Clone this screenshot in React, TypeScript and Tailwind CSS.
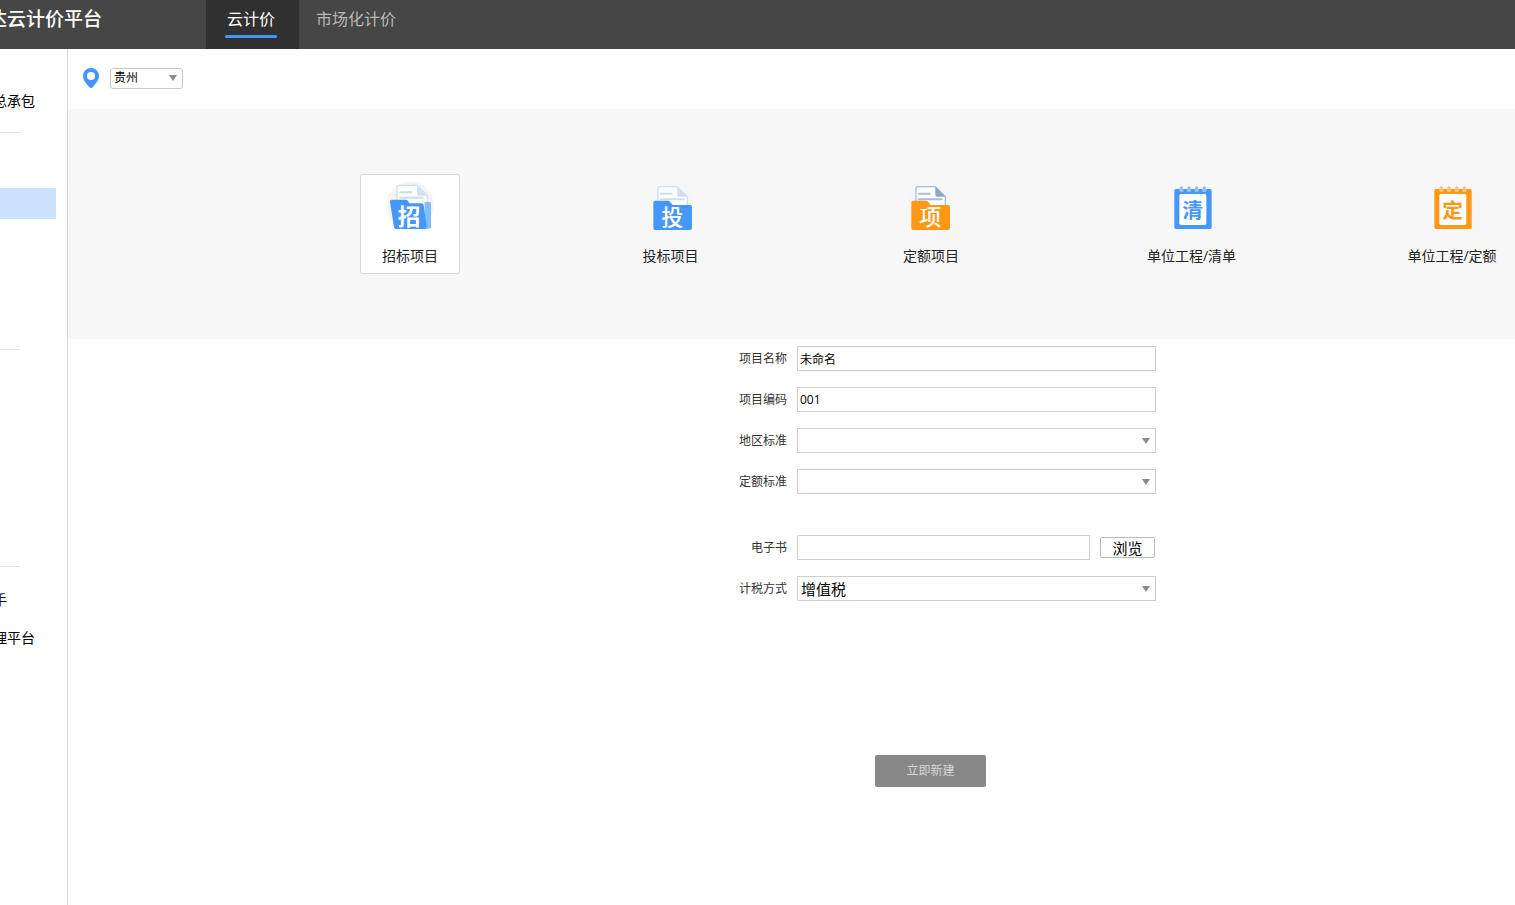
import {useState} from "react";
import type {ReactNode} from "react";
import clsx from "clsx";

const ICON_FONT = "'Noto Sans CJK SC', sans-serif";

const BLUE = "#4697fb";
const ORANGE = "#fd9716";

const BidIcon = () => (
    <svg viewBox="105 48 150 150" className="size-[50px]" aria-hidden="true">
        <circle cx="180" cy="121" r="71" fill="#f5f5f6"/>
        <path d="M144 61h57l31 31v60h-91V65a5 5 0 0 1 5-4z" fill="#fdfeff" stroke="#cfe0f3" strokeWidth="4"/>
        <path d="M201 61v26a5 5 0 0 0 5 5h26z" fill="#d3e0f0"/>
        <path d="M151 82h33M151 98h67" stroke="#cddced" strokeWidth="6" strokeLinecap="round"/>
        <path d="M224 111h15a4 4 0 0 1 4 4v71a5 5 0 0 1-5 5h-16z" fill="#82bdff"/>
        <path
            d="M124 104h44a6 6 0 0 1 5 3l5 8h37a6 6 0 0 1 6 5l9 66a5 5 0 0 1-5 6h-87a6 6 0 0 1-6-5l-12-77a5 5 0 0 1 4-6z"
            fill={BLUE}
        />
        <text x="177" y="181" fontSize="68" fontWeight="700" fill="#fff" textAnchor="middle" fontFamily={ICON_FONT}>招</text>
    </svg>
);

type FolderIconProps = { text: string, color: string, line: string, fold: string, viewBox: string };

const FolderIcon = ({text, color, line, fold, viewBox}: FolderIconProps) => (
    <svg viewBox={viewBox} className="size-[50px]" aria-hidden="true">
        <circle cx="123" cy="92" r="72" fill="#f6f6f7"/>
        <path d="M89 35h53l30 30v60H84V39a5 5 0 0 1 5-4z" fill="#fdfeff" stroke={line} strokeWidth="4"/>
        <path d="M142 35v25a5 5 0 0 0 5 5h26z" fill={fold}/>
        <path d="M92 56h33M92 73h69" stroke={line} strokeWidth="6" strokeLinecap="round"/>
        <path
            d="M75 77h39a8 8 0 0 1 6 3l8 10h52a6 6 0 0 1 6 6v63a6 6 0 0 1-6 6H76a6 6 0 0 1-6-6V82a5 5 0 0 1 5-5z"
            fill={color}
        />
        <text x="127" y="150" fontSize="66" fontWeight="500" fill="#fff" textAnchor="middle" fontFamily={ICON_FONT}>{text}</text>
    </svg>
);

type NotebookIconProps = { text: string, color: string, ring: string };

const NotebookIcon = ({text, color, ring}: NotebookIconProps) => (
    <svg viewBox="81 18 150 150" className="size-[50px]" aria-hidden="true">
        <rect x="103" y="42" width="112" height="120" rx="5" fill={color}/>
        <rect x="118" y="57" width="81" height="93" rx="5" fill="#fff"/>
        {[124, 147, 170, 193].map(x => (
            <g key={x}>
                <circle cx={x} cy="45" r="7" fill={ring}/>
                <circle cx={x} cy="39" r="5" fill={ring}/>
            </g>
        ))}
        <text x="158" y="128" fontSize="62" fontWeight="700" fill={color} textAnchor="middle" fontFamily={ICON_FONT}>{text}</text>
    </svg>
);

const projectTypes: { label: string, icon: ReactNode }[] = [
    {label: "招标项目", icon: <BidIcon/>},
    {
        label: "投标项目",
        icon: <FolderIcon text="投" color={BLUE} line="#cfdff0" fold="#cfdff0" viewBox="48 18 150 150"/>
    },
    {
        label: "定额项目",
        icon: <FolderIcon text="项" color={ORANGE} line="#a9bdd6" fold="#8da7c4" viewBox="54 18 150 150"/>
    },
    {label: "单位工程/清单", icon: <NotebookIcon text="清" color={BLUE} ring="#8fc1fb"/>},
    {label: "单位工程/定额", icon: <NotebookIcon text="定" color={ORANGE} ring="#fbc27c"/>},
];

const Arrow = ({className}: { className: string }) => (
    <svg viewBox="0 0 8 6" className={clsx("pointer-events-none absolute h-[6px] w-[8px]", className)} aria-hidden="true">
        <path d="M0 0h8L4 6z" fill="#8a8a8a"/>
    </svg>
);

const Header = () => (
    <header className="flex h-[49px] bg-[#464646] text-base leading-6">
        <div className="flex w-[102px] justify-end overflow-hidden pt-[7px]">
            <h1 className="shrink-0 whitespace-nowrap text-[19px] font-medium text-white">达云计价平台</h1>
        </div>
        <nav className="ml-[104px] flex">
            <a href="#cloud" className="bg-[#303030] pt-[7px] pr-[22px] pl-[19px] text-white">
                <span className="block w-[52px] text-center">云计价</span>
                <span className="mt-1 block h-[3px] rounded-full bg-[#4196ff]"/>
            </a>
            <a href="#market" className="px-[17px] pt-[7px] text-[#b9b9b9]">市场化计价</a>
        </nav>
    </header>
);

const SideItem = ({label, width = "w-[35px]"}: { label: string, width?: string }) => (
    <a href="#side" className={clsx("flex h-[30px] items-center justify-end overflow-hidden text-sm text-black", width)}>
        <span className="shrink-0 whitespace-nowrap">{label}</span>
    </a>
);

const Divider = () => <hr className="w-5 border-[#e3e3e3]"/>;

const Sidebar = () => (
    <aside className="flex w-[68px] shrink-0 flex-col border-r border-[#d7d7d7] pt-[37px]">
        <SideItem label="总承包"/>
        <div className="h-4"/>
        <Divider/>
        <div className="mt-[55px] mb-[130px] h-[31px] w-14 bg-[#cce3ff]"/>
        <Divider/>
        <div className="h-[216px]"/>
        <Divider/>
        <div className="mt-[18px] flex flex-col gap-2">
            <SideItem label="手" width="w-[7px]"/>
            <SideItem label="理平台"/>
        </div>
    </aside>
);

const Field = ({id, label, children}: { id: string, label: string, children: ReactNode }) => (
    <div className="flex items-center gap-[10px]">
        <label htmlFor={id} className="w-[82px] text-right text-xs text-[#333]">{label}</label>
        <div className="flex w-[359px] items-center gap-[10px]">{children}</div>
    </div>
);

const inputClass = "h-[25px] w-full min-w-0 border border-[#cfcfcf] bg-white px-[2px] text-xs text-black outline-none";

const SelectBox = ({id, options = []}: { id: string, options?: string[] }) => (
    <div className="relative w-full">
        <select
            id={id}
            className="block h-[25px] w-full appearance-none border border-[#cfcfcf] bg-white px-[3px] text-[15px] leading-[22px] text-black outline-none"
        >
            {options.map(option => <option key={option}>{option}</option>)}
        </select>
        <Arrow className="top-[10px] right-[6px]"/>
    </div>
);

const App = () => {
    const [selected, setSelected] = useState(0);
    const [name, setName] = useState("未命名");
    const [code, setCode] = useState("001");
    const [book, setBook] = useState("");

    return <div className="flex min-h-screen flex-col bg-white font-['Open_Sans','Noto_Sans_CJK_SC',sans-serif]">
        <Header/>
        <div className="flex flex-1">
            <Sidebar/>
            <main className="min-w-0 flex-1">
                <div className="flex h-[60px] items-center gap-[11px] pb-[2px] pl-[15px]">
                    <svg viewBox="0 0 16 20" className="h-5 w-4" aria-hidden="true">
                        <path
                            d="M8 0a8 8 0 0 1 8 8c0 4-3 7-6 11a2.500 2.500 0 0 1-4 0C3 15 0 12 0 8a8 8 0 0 1 8-8z"
                            fill="#4196ff"
                        />
                        <circle cx="8" cy="8" r="4" fill="#fff"/>
                    </svg>
                    <div className="relative">
                        <select
                            aria-label="地区"
                            className="block h-[21px] w-[73px] appearance-none rounded-[3px] border border-[#c9c9c9] bg-white pl-[3px] text-xs text-black outline-none"
                        >
                            <option>贵州</option>
                        </select>
                        <Arrow className="top-[7px] right-[6px]"/>
                    </div>
                </div>

                <section className="flex h-[230px] items-start justify-between bg-[#f7f7f7] pt-[65px] pr-[13px] pl-[292px]">
                    {projectTypes.map(({label, icon}, index) => (
                        <button
                            key={label}
                            type="button"
                            onClick={() => setSelected(index)}
                            className={clsx(
                                "flex h-[100px] w-[100px] shrink-0 flex-col items-center gap-[15px] rounded-[3px] border pt-[6px]",
                                index === selected ? "border-[#d5dadc] bg-white" : "border-transparent"
                            )}
                        >
                            {icon}
                            <span className="whitespace-nowrap text-sm leading-5 text-[#222]">{label}</span>
                        </button>
                    ))}
                </section>

                <form className="flex flex-col items-center pt-[7px] pl-[278px]" onSubmit={e => e.preventDefault()}>
                    <div className="flex flex-col gap-4">
                        <Field id="name" label="项目名称">
                            <input id="name" className={inputClass} value={name} onChange={e => setName(e.target.value)}/>
                        </Field>
                        <Field id="code" label="项目编码">
                            <input id="code" className={inputClass} value={code} onChange={e => setCode(e.target.value)}/>
                        </Field>
                        <Field id="region" label="地区标准">
                            <SelectBox id="region"/>
                        </Field>
                        <Field id="quota" label="定额标准">
                            <SelectBox id="quota"/>
                        </Field>
                    </div>
                    <div className="mt-[41px] flex flex-col gap-4">
                        <Field id="book" label="电子书">
                            <input id="book" className={inputClass} value={book} onChange={e => setBook(e.target.value)}/>
                            <button
                                type="button"
                                className="mr-px h-[21px] w-[55px] shrink-0 rounded-[2px] border border-[#b9b9b9] bg-white text-[15px] leading-5 text-black"
                            >
                                浏览
                            </button>
                        </Field>
                        <Field id="tax" label="计税方式">
                            <SelectBox id="tax" options={["增值税"]}/>
                        </Field>
                    </div>
                    <button
                        type="submit"
                        disabled
                        className="mt-[154px] h-8 w-[111px] rounded-[2px] bg-[#888] text-xs text-[#d6d6d6]"
                    >
                        立即新建
                    </button>
                </form>
            </main>
        </div>
    </div>
};

export default App;
